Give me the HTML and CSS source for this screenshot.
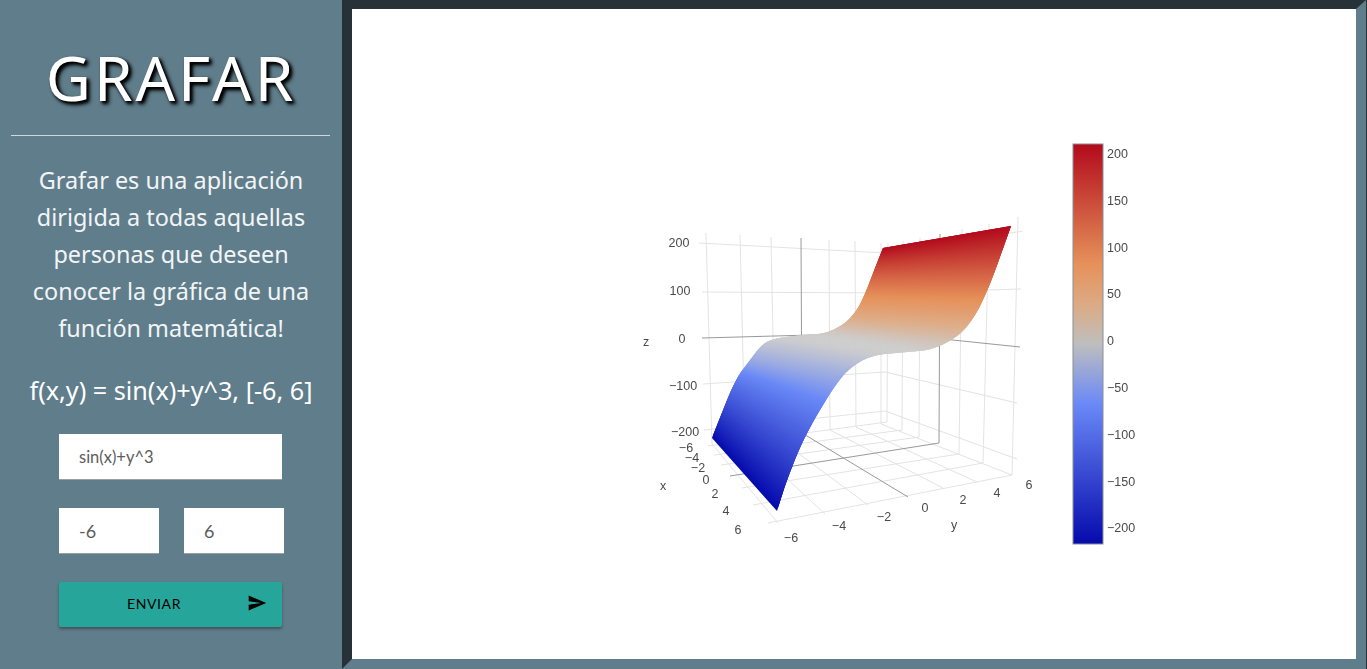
FILE: index.html
```html
<!doctype html>
<html>
<head>
<meta charset="utf-8">
<title>Grafar</title>
<link rel="stylesheet" href="styles.css">
</head>
<body>
<div class="side">
	<h1 class="title">GRAFAR</h1>
	<div class="line"></div>
	<p class="intro">Grafar es una aplicación dirigida a todas aquellas personas que deseen conocer la gráfica de una función matemática!</p>
	<p class="formula">f(x,y) = sin(x)+y^3, [-6, 6]</p>
	<input class="field field_wide" type="text" value="sin(x)+y^3">
	<div class="range">
		<input class="field field_small" type="text" value="-6">
		<input class="field field_small" type="text" value="6">
	</div>
	<a href="javascript:;" class="send">
		<span class="send_text">ENVIAR</span>
		<svg class="send_icon" viewBox="0 0 24 24"><path d="M2.01 21L23 12 2.01 3 2 10l15 2-15 2z"/></svg>
	</a>
</div>
<div class="main">
	<svg class="plot" viewBox="352 9 1004 650">
		<defs>
			<linearGradient id="bar_fill" x1="0" y1="1" x2="0" y2="0">
				<stop offset="0" stop-color="rgb(5,10,172)"/>
				<stop offset="0.35" stop-color="rgb(106,137,247)"/>
				<stop offset="0.5" stop-color="rgb(190,190,190)"/>
				<stop offset="0.6" stop-color="rgb(220,170,132)"/>
				<stop offset="0.7" stop-color="rgb(230,145,90)"/>
				<stop offset="1" stop-color="rgb(178,10,28)"/>
			</linearGradient>
		</defs>
		<!-- paredes y piso -->
		<path class="grid" d="M706 233L712 444M740 235L745 440M771 237L775 436M829 240L830 430M855 241L856 427M881 243L881 424
			M888 243L887 422M903 241L902 430M920 238L919 437M962 229L959 454M989 224L983 463M1018 217L1012 475
			M699 243L885 253L1023 231M702 292L885 293L1021 289M703 384L885 372L1017 403M704 430L885 411L1017 459
			M708 446L887 422M714 455L902 430M721 465L919 437M742 488L959 454M753 505L983 463M768 523L1012 475
			M712 444L778 523M745 440L825 514M775 436L868 505M830 430L943 488M856 427L977 482M881 424L1012 475"/>
		<path class="axis" d="M801 238L802 433M940 234L939 443M702 338L885 333L1020 347M730 476L939 443M802 433L908 497"/>
		<g id="surface"></g>
		<g class="ticks">
			<text x="679" y="247" text-anchor="middle">200</text>
			<text x="680" y="295" text-anchor="middle">100</text>
			<text x="682" y="343" text-anchor="middle">0</text>
			<text x="683" y="390" text-anchor="middle">−100</text>
			<text x="685" y="436" text-anchor="middle">−200</text>
			<text x="646" y="346" text-anchor="middle">z</text>
			<text x="686" y="452" text-anchor="middle">−6</text>
			<text x="692" y="462" text-anchor="middle">−4</text>
			<text x="698" y="472" text-anchor="middle">−2</text>
			<text x="706" y="484" text-anchor="middle">0</text>
			<text x="715" y="498" text-anchor="middle">2</text>
			<text x="726" y="515" text-anchor="middle">4</text>
			<text x="738" y="534" text-anchor="middle">6</text>
			<text x="663" y="490" text-anchor="middle">x</text>
			<text x="791" y="542" text-anchor="middle">−6</text>
			<text x="839" y="530" text-anchor="middle">−4</text>
			<text x="884" y="521" text-anchor="middle">−2</text>
			<text x="925" y="512" text-anchor="middle">0</text>
			<text x="963" y="504" text-anchor="middle">2</text>
			<text x="997" y="497" text-anchor="middle">4</text>
			<text x="1029" y="489" text-anchor="middle">6</text>
			<text x="954" y="529" text-anchor="middle">y</text>
		</g>
		<rect class="bar" x="1073" y="144" width="30" height="400" fill="url(#bar_fill)"/>
		<g class="ticks">
			<text x="1107" y="158">200</text>
			<text x="1107" y="205">150</text>
			<text x="1107" y="252">100</text>
			<text x="1107" y="298">50</text>
			<text x="1107" y="345">0</text>
			<text x="1107" y="392">−50</text>
			<text x="1107" y="439">−100</text>
			<text x="1107" y="486">−150</text>
			<text x="1107" y="532">−200</text>
		</g>
	</svg>
</div>
<script src="plot.js"></script>
</body>
</html>
```

FILE: styles.css
```css
*{margin:0;padding:0;box-sizing:border-box;}
html,body{height:100%;overflow:hidden;}
body{background:#263238;display:flex;height:669px;font-family:"Noto Sans",sans-serif;}

.side{width:342px;height:669px;background:#607d8b;padding:0 11px;flex:none;color:#f2f5f6;text-align:center;}
.title{font-size:62px;font-weight:400;line-height:84px;margin-top:35px;letter-spacing:3px;color:#fff;text-shadow:3px 3px 4px #000,2px 2px 3px #000;}
.line{height:1px;background:#cfd8dc;margin-top:16px;width:319px;}
.intro{font-size:23.4px;line-height:37px;margin-top:26px;padding:0 10px;}
.formula{font-size:25.2px;line-height:37px;margin-top:25px;color:#fff;white-space:nowrap;}

.field{display:block;height:46px;background:#fff;border:0;border-bottom:1px solid #9e9e9e;padding-left:20px;font-family:"Lato",sans-serif;color:#5c5c5c;outline:none;}
.field_wide{width:223px;margin:25px 0 0 48px;font-size:16.5px;}
.range{display:flex;gap:25px;margin:28px 0 0 48px;}
.field_small{width:100px;font-size:18px;}

.send{display:flex;align-items:center;width:223px;height:45px;margin:28px 0 0 48px;padding-bottom:3px;background:#26a69a;border-radius:2px;color:#000;text-decoration:none;box-shadow:0 2px 3px rgba(0,0,0,.35);font-family:"Lato",sans-serif;font-size:14px;letter-spacing:.6px;}
.send_text{margin-left:68px;}
.send_icon{width:20px;height:20px;margin-left:auto;margin-right:15px;}

.main{width:1024px;height:669px;flex:none;background:#fff;border-style:solid;border-width:9px 10px 10px 10px;border-color:#263238 #607d8b #607d8b #263238;}
.plot{display:block;width:1004px;height:650px;}
.grid{fill:none;stroke:#e3e3e3;stroke-width:1;}
.axis{fill:none;stroke:#999;stroke-width:1;}
.bar{stroke:#8a8f94;stroke-width:1;}
.ticks text{font-family:"Liberation Sans",sans-serif;font-size:12.5px;fill:#4a4a4a;}
.ticks{filter:blur(.3px);}
```

FILE: plot.js
```js
// superficie z = sin(x)+y^3, bordes leidos como [y, px, py]
var edgeL=[[-6,712,438],[-4.5,735,380],[-2.2,763,343],[-1,777,338],[0.3,803,335],[1.5,823,334],[2.9,840,327],[3.6,853,317],[4.36,863,300],[5.2,873,273],[6,883,248]];
var edgeR=[[-6,777,511],[-5.45,790,470],[-4.9,803,438],[-4.3,820,410],[-3.4,838,380],[-2.6,853,365],[-1.6,873,355],[0,907,352],[1.5,930,350],[2.75,953,340],[3.6,970,325],[4.67,987,293],[5.47,1000,257],[6,1011,226]];
// el gris central sale mas claro que en la barra por la luz
var stops=[[0,5,10,172],[0.35,106,137,247],[0.5,205,205,205],[0.6,222,172,134],[0.7,230,145,90],[1,178,10,28]];
var total=360;

function onEdge(edge,y){
	for(var i=1;i<edge.length;i++){
		if(y<=edge[i][0]){
			var s=(y-edge[i-1][0])/(edge[i][0]-edge[i-1][0]);
			return [edge[i-1][1]+s*(edge[i][1]-edge[i-1][1]),edge[i-1][2]+s*(edge[i][2]-edge[i-1][2])];
		}
	}
	return [edge[edge.length-1][1],edge[edge.length-1][2]];
}
// muestras suavizadas, la ventana se achica en las puntas
function sample(edge){
	var raw=[],out=[];
	for(var n=0;n<=total;n++){
		raw.push(onEdge(edge,-6+12*n/total));
	}
	for(var m=0;m<=total;m++){
		var w=Math.min(18,m,total-m),sx=0,sy=0;
		for(var k=m-w;k<=m+w;k++){
			sx+=raw[k][0];
			sy+=raw[k][1];
		}
		out.push([sx/(2*w+1),sy/(2*w+1)]);
	}
	return out;
}
function getColor(t){
	for(var i=1;i<stops.length;i++){
		if(t<=stops[i][0]){
			var s=(t-stops[i-1][0])/(stops[i][0]-stops[i-1][0]);
			var c=[1,2,3].map(function(k){
				return Math.round(stops[i-1][k]+s*(stops[i][k]-stops[i-1][k]));
			});
			return 'rgb('+c.join(',')+')';
		}
	}
	return 'rgb(178,10,28)';
}

var oSurface=document.getElementById('surface');
var left=sample(edgeL),right=sample(edgeR);
for(var n=0;n<total;n++){
	// cada tira pisa a la anterior para que no queden rayas
	var e=Math.min(n+3,total);
	var ym=-6+12*(n+0.5)/total;
	var p=document.createElementNS('http://www.w3.org/2000/svg','polygon');
	p.setAttribute('points',[left[n],right[n],right[e],left[e]].map(function(q){return q.join(',');}).join(' '));
	p.setAttribute('fill',getColor((ym*ym*ym+216)/432));
	oSurface.appendChild(p);
}
```
